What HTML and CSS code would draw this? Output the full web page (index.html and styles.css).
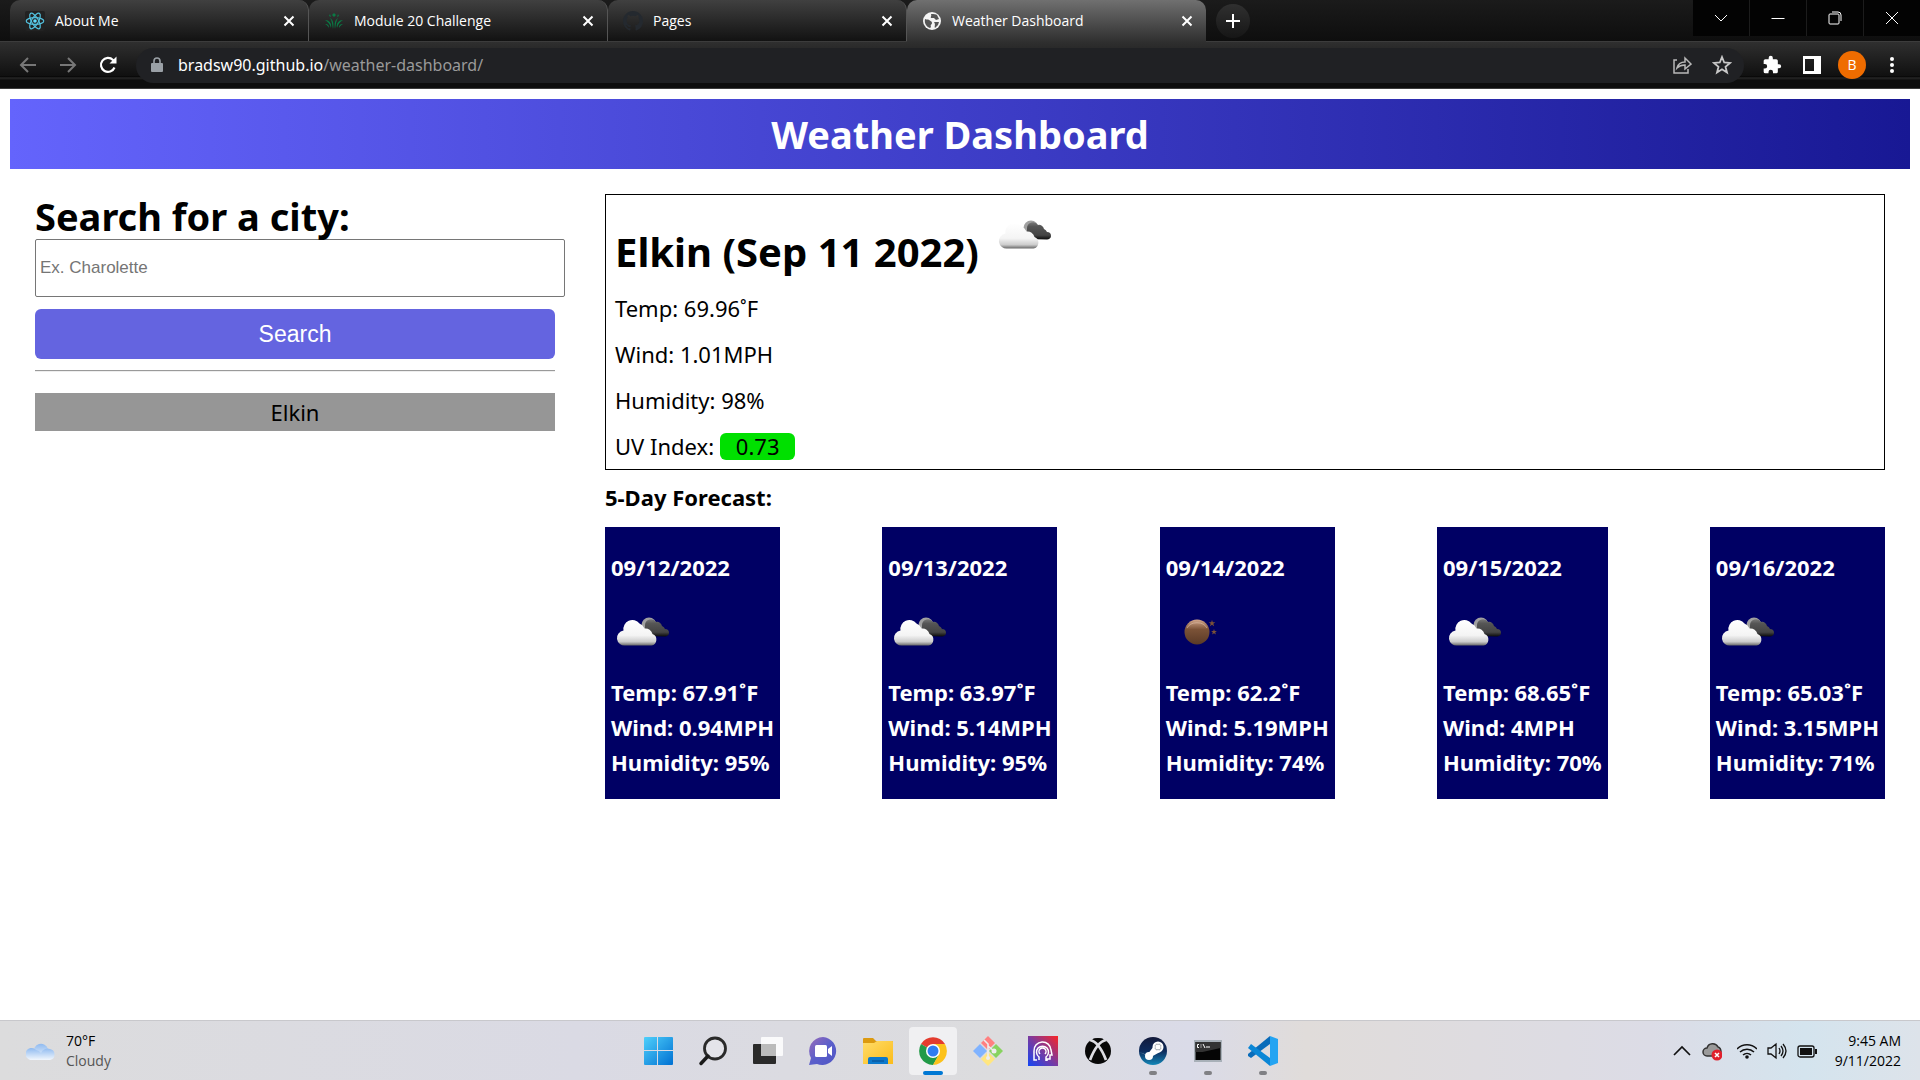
FILE: index.html
```html
<!DOCTYPE html>
<html lang="en">
<head>
<meta charset="utf-8">
<title>Weather Dashboard</title>
<link rel="stylesheet" href="styles.css">
</head>
<body>
<svg class="defs" aria-hidden="true">
  <defs>
    <linearGradient id="cloud-light" x1="0" y1="0" x2="0" y2="1">
      <stop offset="0" stop-color="#fff"/><stop offset=".6" stop-color="#f4f4f4"/><stop offset=".85" stop-color="#ccc"/><stop offset="1" stop-color="#666"/>
    </linearGradient>
    <linearGradient id="cloud-dark" x1="0" y1="0" x2="0" y2="1">
      <stop offset="0" stop-color="#777"/><stop offset=".25" stop-color="#555"/><stop offset=".75" stop-color="#444"/><stop offset="1" stop-color="#0a0a0a"/>
    </linearGradient>
    <linearGradient id="moon-fill" x1="0" y1="0" x2="0" y2="1">
      <stop offset="0" stop-color="#d3a78c"/><stop offset=".4" stop-color="#7b5237"/><stop offset="1" stop-color="#5a3a26"/>
    </linearGradient>
    <linearGradient id="win-fill" x1="0" y1="0" x2="1" y2="1"><stop offset="0" stop-color="#4fd0fb"/><stop offset="1" stop-color="#0070d2"/></linearGradient>
    <linearGradient id="chat-fill" x1="0" y1="0" x2="1" y2="1"><stop offset="0" stop-color="#9a6bb8"/><stop offset=".5" stop-color="#5b5fcb"/><stop offset="1" stop-color="#4f55c4"/></linearGradient>
    <linearGradient id="folder-fill" x1="0" y1="0" x2="1" y2="1"><stop offset="0" stop-color="#ffdc6a"/><stop offset="1" stop-color="#fbbc1a"/></linearGradient>
    <linearGradient id="head-fill" x1="0" y1="1" x2="1" y2="0"><stop offset="0" stop-color="#1246f5"/><stop offset=".5" stop-color="#7a3aa0"/><stop offset="1" stop-color="#fb2525"/></linearGradient>
    <linearGradient id="steam-fill" x1="0" y1="0" x2="0" y2="1"><stop offset="0" stop-color="#131a3a"/><stop offset=".5" stop-color="#0d2b5c"/><stop offset="1" stop-color="#1387b8"/></linearGradient>
    <linearGradient id="sky-fill" x1="0" y1="0" x2="0" y2="1"><stop offset="0" stop-color="#8fbaf0"/><stop offset="1" stop-color="#f2f7fd"/></linearGradient>
    <symbol id="clouds" viewBox="0 0 63 63">
      <circle cx="38" cy="24" r="7.500" fill="#a0a0a0"/>
      <path d="M34 35V24a6 6 0 0 1 11-3 5 5 0 0 1 6 4 5 5 0 0 1 3 3 4 4 0 0 1 4 4c0 2-2 3.500-4 3.500z" fill="url(#cloud-dark)"/>
      <path d="M15 44a7.500 7.500 0 0 1-2-15 9 9 0 0 1 16-7 9 9 0 0 1 5 5 7 7 0 0 1 8 5.500 6 6 0 0 1-1 11.500z" transform="translate(-.5 .5)" fill="url(#cloud-light)"/>
    </symbol>
    <symbol id="moon" viewBox="0 0 63 63">
      <circle cx="31" cy="31" r="12.500" fill="url(#moon-fill)"/>
      <path d="M21 27a11 9 0 0 1 20 0" fill="none" stroke="#e0c0aa" stroke-width="1" opacity=".6"/>
      <path d="m46 19 .8 2.200h2.500l-2 1.600.8 2.500-2.100-1.500-2.100 1.500.8-2.500-2-1.600h2.500zM48 28l.7 2h2.200l-1.700 1.300.7 2.200-1.900-1.300-1.900 1.300.7-2.200-1.700-1.300h2.200z" fill="#7b5237"/>
    </symbol>
    <symbol id="close" viewBox="0 0 12 12"><path d="m1.500 1.500 9 9m0-9-9 9" stroke="#fff" stroke-width="2" fill="none"/></symbol>
  </defs>
</svg>

<header class="browser">
  <div class="tab-strip">
    <div class="tab">
      <svg class="favicon" viewBox="0 0 20 20"><rect width="20" height="20" rx="2" fill="#222"/><g fill="none" stroke="#53c1de" stroke-width="1.200"><ellipse cx="10" cy="10" rx="8.800" ry="3.400"/><ellipse cx="10" cy="10" rx="8.800" ry="3.400" transform="rotate(60 10 10)"/><ellipse cx="10" cy="10" rx="8.800" ry="3.400" transform="rotate(120 10 10)"/></g><circle cx="10" cy="10" r="1.800" fill="#61dafb"/></svg>
      <span class="tab-title">About Me</span>
      <button class="tab-close" aria-label="Close About Me"><svg><use href="#close"/></svg></button>
    </div>
    <div class="tab">
      <svg class="favicon" viewBox="0 0 20 20"><g fill="#0a7a45"><path d="m10 2 2 2-2 2-2-2zM6 3l1 3-2-1zM14 3l-1 3 2-1z"/><path d="M9 18C8 13 8 10 6 7c3 2 4 5 3 11zM11 18c1-5 1-8 3-11-3 2-4 5-3 11zM7 17c-1-4-3-6-6-8 4 0 7 3 6 8zM13 17c1-4 3-6 6-8-4 0-7 3-6 8zM5 17c-1-2-2-3-4-4 3 0 4 1 4 4zM15 17c1-2 2-3 4-4-3 0-4 1-4 4z"/></g></svg>
      <span class="tab-title">Module 20 Challenge</span>
      <button class="tab-close" aria-label="Close Module 20 Challenge"><svg><use href="#close"/></svg></button>
    </div>
    <div class="tab">
      <svg class="favicon" viewBox="0 0 16 16"><path fill="#24292f" d="M8 0C3.580 0 0 3.580 0 8c0 3.540 2.290 6.530 5.470 7.590.4.070.55-.17.55-.38v-1.490c-2.010.37-2.530-.49-2.690-.94-.09-.23-.48-.94-.82-1.130-.28-.15-.68-.52-.01-.53.63-.01 1.080.58 1.230.82.72 1.210 1.870.87 2.330.66.07-.52.28-.87.51-1.070-1.780-.2-3.640-.89-3.640-3.950 0-.87.31-1.590.82-2.150-.08-.2-.36-1.020.08-2.120 0 0 .67-.21 2.200.82a7.500 7.500 0 0 1 4 0c1.530-1.040 2.200-.82 2.200-.82.44 1.100.16 1.920.08 2.120.51.56.82 1.270.82 2.150 0 3.070-1.870 3.750-3.650 3.950.29.25.54.73.54 1.480v2.200c0 .21.15.46.55.38A8 8 0 0 0 16 8c0-4.420-3.580-8-8-8z"/></svg>
      <span class="tab-title">Pages</span>
      <button class="tab-close" aria-label="Close Pages"><svg><use href="#close"/></svg></button>
    </div>
    <div class="tab tab-active">
      <svg class="favicon" viewBox="0 0 20 20"><circle cx="10" cy="10" r="9" fill="#f4f4f4"/><path d="M3 8c2 1 3 0 4 1s3 1 3 3-2 1-1 4l-1 1c-3-1-6-4-5-9zM9 3c3 0 5 0 6 1l2 4-3 1-2-2-3 0c-1-1 1-2 0-4zM12 11l5 0-1 3-3 3c-1-2 1-3-1-6z" fill="#555"/></svg>
      <span class="tab-title">Weather Dashboard</span>
      <button class="tab-close" aria-label="Close Weather Dashboard"><svg><use href="#close"/></svg></button>
    </div>
    <button class="new-tab" aria-label="New tab"><svg viewBox="0 0 16 16"><path d="M8 1v14M1 8h14" stroke="#fff" stroke-width="2"/></svg></button>
    <div class="window-controls">
      <button aria-label="Search tabs"><svg viewBox="0 0 14 14"><path d="m1 4 6 6 6-6"/></svg></button>
      <button aria-label="Minimize"><svg viewBox="0 0 14 14"><path d="M.5 7.500h13"/></svg></button>
      <button aria-label="Restore"><svg viewBox="0 0 14 14"><rect x="1" y="3" width="10" height="10" rx="1"/><path d="M4 1h6q3 0 3 3v6"/></svg></button>
      <button aria-label="Close"><svg viewBox="0 0 14 14"><path d="m1 1 12 12M13 1 1 13"/></svg></button>
    </div>
  </div>
  <div class="toolbar">
    <div class="nav-buttons">
      <button aria-label="Back"><svg viewBox="0 0 20 20"><path d="M18 10H3m7-7-7 7 7 7" fill="none" stroke="#777" stroke-width="2"/></svg></button>
      <button aria-label="Forward"><svg viewBox="0 0 20 20"><path d="M2 10h15m-7-7 7 7-7 7" fill="none" stroke="#777" stroke-width="2"/></svg></button>
      <button aria-label="Reload"><svg viewBox="0 0 20 20"><path d="M16.500 12.500A7 7 0 1 1 15 5l2 2" fill="none" stroke="#fff" stroke-width="2.200"/><path d="M18.500 1.500v7h-7z" fill="#fff"/></svg></button>
    </div>
    <div class="omnibox">
      <svg class="lock" viewBox="0 0 12 16"><rect x="0" y="6" width="12" height="9" rx="1" fill="#9aa0a6"/><path d="M3 7V4a3 3 0 0 1 6 0v3" fill="none" stroke="#9aa0a6" stroke-width="1.600"/></svg>
      <a class="url" href="#"><span class="url-host">bradsw90.github.io</span>/weather-dashboard/</a>
      <button aria-label="Share"><svg viewBox="0 0 20 20"><path d="M5 5H2v13h14v-4M5 13c1-4 4-6 8-6V3l6 6-6 5v-4c-4 0-6 1-8 3z" fill="none" stroke="#b8b8b8" stroke-width="1.500"/></svg></button>
      <button aria-label="Bookmark"><svg viewBox="0 0 20 20"><path d="m10 2 2.200 5.500 5.800.4-4.500 3.800 1.500 5.800-5-3.200-5 3.200 1.500-5.800L2 7.900l5.800-.4z" fill="none" stroke="#c8c8c8" stroke-width="1.800"/></svg></button>
    </div>
    <div class="toolbar-actions">
      <button aria-label="Extensions"><svg viewBox="0 0 24 24"><path fill="#fff" d="M20.500 11H19V7a2 2 0 0 0-2-2h-4V3.500a2.500 2.500 0 0 0-5 0V5H4a2 2 0 0 0-2 2v3.800h1.500a2.700 2.700 0 0 1 0 5.400H2V20a2 2 0 0 0 2 2h3.800v-1.500a2.700 2.700 0 0 1 5.400 0V22H17a2 2 0 0 0 2-2v-4h1.500a2.500 2.500 0 0 0 0-5z"/></svg></button>
      <button aria-label="Side panel"><svg viewBox="0 0 20 20"><path fill="#fff" fill-rule="evenodd" d="M1 1h18v18H1zM3 4v12h9V4z"/></svg></button>
      <button class="avatar" aria-label="Profile">B</button>
      <button aria-label="Menu"><svg viewBox="0 0 20 20"><g fill="#fff"><circle cx="10" cy="4" r="2"/><circle cx="10" cy="10" r="2"/><circle cx="10" cy="16" r="2"/></g></svg></button>
    </div>
  </div>
</header>

<main class="page">
  <h1 class="banner">Weather Dashboard</h1>
  <div class="dashboard">
    <aside class="search">
      <form>
        <label class="heading" for="city">Search for a city:</label>
        <input id="city" class="city-input" type="text" placeholder="Ex. Charolette">
        <button class="search-button" type="button">Search</button>
      </form>
      <hr class="rule">
      <button class="history-item">Elkin</button>
    </aside>
    <section class="results">
      <article class="current">
        <h2 class="current-title">Elkin (Sep 11 2022) <svg class="weather-icon"><use href="#clouds"/></svg></h2>
        <p>Temp: 69.96˚F</p>
        <p>Wind: 1.01MPH</p>
        <p>Humidity: 98%</p>
        <p>UV Index: <span class="uv">0.73</span></p>
      </article>
      <h3 class="forecast-title">5-Day Forecast:</h3>
      <div class="forecast">
        <article class="day"><h4>09/12/2022</h4><svg class="weather-icon"><use href="#clouds"/></svg><p>Temp: 67.91˚F</p><p>Wind: 0.94MPH</p><p>Humidity: 95%</p></article>
        <article class="day"><h4>09/13/2022</h4><svg class="weather-icon"><use href="#clouds"/></svg><p>Temp: 63.97˚F</p><p>Wind: 5.14MPH</p><p>Humidity: 95%</p></article>
        <article class="day"><h4>09/14/2022</h4><svg class="weather-icon"><use href="#moon"/></svg><p>Temp: 62.2˚F</p><p>Wind: 5.19MPH</p><p>Humidity: 74%</p></article>
        <article class="day"><h4>09/15/2022</h4><svg class="weather-icon"><use href="#clouds"/></svg><p>Temp: 68.65˚F</p><p>Wind: 4MPH</p><p>Humidity: 70%</p></article>
        <article class="day"><h4>09/16/2022</h4><svg class="weather-icon"><use href="#clouds"/></svg><p>Temp: 65.03˚F</p><p>Wind: 3.15MPH</p><p>Humidity: 71%</p></article>
      </div>
    </section>
  </div>
</main>

<footer class="taskbar">
  <div class="widget">
    <svg viewBox="0 0 30 20"><path d="M8 12a7 7 0 0 1 14-4v10H8z" fill="url(#sky-fill)"/><path d="M6 19a6 6 0 1 1 4-10 7 7 0 0 1 5 3 7 7 0 0 1 9-4 5.600 5.600 0 0 1 0 11z" fill="url(#sky-fill)"/></svg>
    <div><div class="degrees">70°F</div><div class="sky">Cloudy</div></div>
  </div>
  <nav class="apps">
    <button aria-label="Start"><svg viewBox="0 0 30 30"><path d="M2 1h12v13H1V2q0-1 1-1zM15 1h14q1 0 1 1v12H15zM1 15h13v14H2q-1 0-1-1zM15 15h15v13q0 1-1 1H15z" fill="url(#win-fill)"/></svg></button>
    <button aria-label="Search"><svg viewBox="0 0 30 30"><circle cx="17" cy="12.500" r="10.500" fill="#e4e4ea" stroke="#2a2a2a" stroke-width="2.800"/><path d="M10 20 3 27.500" stroke="#1a1a1a" stroke-width="3.500" stroke-linecap="round"/></svg></button>
    <button aria-label="Task view"><svg viewBox="0 0 30 30"><rect x="0" y="8" width="23" height="20" rx="1" fill="#2a2a2a"/><rect x="8" y="1" width="22" height="19" rx="1" fill="#fff" opacity=".85"/><path d="M8 8h15v12H8z" fill="#bbb"/></svg></button>
    <button aria-label="Chat"><svg viewBox="0 0 30 30"><path d="M15 1a14 14 0 1 1-6 27L1 29l2-7A14 14 0 0 1 15 1z" fill="url(#chat-fill)"/><rect x="7" y="9" width="12" height="12" rx="1.500" fill="#fff"/><path d="m20 13 4-3v10l-4-3z" fill="#fff"/></svg></button>
    <button aria-label="File Explorer"><svg viewBox="0 0 30 30"><path d="M0 3q0-1 1-1h9l3 3h16q1 0 1 1v6H0z" fill="#dc9a10"/><path d="M0 7h11l3-2h15q1 0 1 1v22H0z" fill="url(#folder-fill)"/><path d="M5 28v-5q0-2 2-2h16q2 0 2 2v5z" fill="#0c79cc"/><path d="M9 25h12" stroke="#074a8c" stroke-width="1"/></svg></button>
    <button class="app-active" aria-label="Chrome"><svg viewBox="0 0 30 30"><path d="M15 15 3 8a14 14 0 0 1 24 0z" fill="#e33b2e"/><path d="M15 15 3 8a14 14 0 0 0 12 21l6-10z" fill="#229a48"/><path d="M15 15V8h12a14 14 0 0 1-12 21l6-11z" fill="#fcc21b"/><circle cx="15" cy="15" r="7" fill="#fff"/><circle cx="15" cy="15" r="5.500" fill="#2f7cf0"/></svg></button>
    <button aria-label="Git"><svg viewBox="0 0 30 30"><path d="m15 0 7 7-7 7-7-7z" fill="#ff8080"/><path d="m7 8 7 7-7 7-7-7z" fill="#80b3ff"/><path d="m23 8 7 7-7 7-7-7z" fill="#87d35f"/><path d="m15 16 7 7-7 7-7-7z" fill="#ffe680"/><path d="m11 4 4 4v14m0-12 6 5" fill="none" stroke="#eee" stroke-width="1.600"/><circle cx="15" cy="22" r="2" fill="#eee"/><circle cx="21" cy="15" r="2.500" fill="#eee"/></svg></button>
    <button aria-label="Mind app"><svg viewBox="0 0 30 30"><rect width="30" height="30" fill="url(#head-fill)"/><path d="M9 24H6v-9a8.500 8.500 0 0 1 17-1l1 5h-2v4h-3v2M11 24v-3a6 6 0 1 1 7 0v4M12 18a3.500 3.500 0 1 1 5 0" fill="none" stroke="#fff" stroke-width="1.500"/></svg></button>
    <button aria-label="Xbox"><svg viewBox="0 0 30 30"><circle cx="15" cy="15" r="13" fill="#080808"/><path d="M7 4c5 1 11 7 16 20M23 4C18 5 12 11 7 24" fill="none" stroke="#dcdce2" stroke-width="2.800"/><path d="M10 2.500q5 0 10 0l-5 3z" fill="#080808"/></svg></button>
    <button class="app-running" aria-label="Steam"><svg viewBox="0 0 30 30"><circle cx="15" cy="15" r="14" fill="url(#steam-fill)"/><path d="m1 16 8 3 7-9 6 6-9 5" fill="#fff"/><circle cx="20" cy="11" r="5.500" fill="#fff"/><circle cx="20" cy="11" r="3.500" fill="#123" stroke="#fff"/><circle cx="20" cy="11" r="2.800" fill="#fff"/><circle cx="11" cy="20" r="4" fill="#fff"/></svg></button>
    <button class="app-running" aria-label="Command Prompt"><svg viewBox="0 0 30 30"><rect x="1" y="4" width="28" height="22" fill="#a8b0b8"/><rect x="2.500" y="6" width="25" height="18" fill="#050505"/><path d="M2.500 6h25v6l-18 4h-7z" fill="#333"/><path d="M6 8.500H4.500v3H6M8 8.500v1m0 1v1M10 8l2 4M13 11h4" stroke="#fff" stroke-width="1" fill="none"/></svg></button>
    <button class="app-running" aria-label="Visual Studio Code"><svg viewBox="0 0 30 30"><path d="M22 8 3 22l-3-2v-2L22 0z" fill="#0a6cba"/><path d="M22 30 0 12l3-4 19 14z" fill="#0a86d6"/><path d="m22 0 8 3v24l-8 3z" fill="#24a4f2"/></svg></button>
  </nav>
  <div class="tray">
    <svg viewBox="0 0 20 20"><path d="m2 14 8-8 8 8" fill="none" stroke="#111" stroke-width="1.700"/></svg>
    <svg class="sync" viewBox="0 0 20 20"><path d="M5 15a4 4 0 0 1 0-8 6 6 0 0 1 11-1q3 1 3 5l-5 4z" fill="#9a9a9a" stroke="#333" stroke-width="1.500"/><circle cx="15" cy="14" r="5.500" fill="#e0202c"/><path d="m13 12 4 4m0-4-4 4" stroke="#fff" stroke-width="1.500"/></svg>
    <svg viewBox="0 0 20 20"><g fill="none" stroke="#111" stroke-width="1.500"><path d="M0 8a14 14 0 0 1 20 0M3 11a10 10 0 0 1 14 0M6 14a6 6 0 0 1 8 0"/></g><circle cx="10" cy="16" r="1.800" fill="#111"/></svg>
    <svg viewBox="0 0 20 20"><path d="M1 7v6h3l5 4V3L4 7zM12 7q2 3 0 6M14 5q4 5 0 10M16 3q6 7 0 14" fill="none" stroke="#111" stroke-width="1.300"/></svg>
    <svg viewBox="0 0 20 20"><rect x="1" y="5" width="16" height="11" rx="2" fill="none" stroke="#111" stroke-width="1.300"/><rect x="3" y="7" width="12" height="7" fill="#111"/><path d="M18 8h2v5h-2z" fill="#111"/></svg>
    <div class="clock"><div>9:45 AM</div><div>9/11/2022</div></div>
  </div>
</footer>
</body>
</html>
```
FILE: styles.css
```css
* {
  box-sizing: border-box;
}

body {
  margin: 0;
  min-height: 100vh;
  display: flex;
  flex-direction: column;
  background: #fff;
  color: #000;
  font-family: "Noto Sans", sans-serif;
  font-size: 22px;
  line-height: 27px;
}

h1, h2, h3, h4, p {
  margin: 0;
  font-size: inherit;
}

button {
  display: flex;
  align-items: center;
  justify-content: center;
  border: 0;
  padding: 0;
  background: none;
  color: inherit;
  font: inherit;
}

.defs {
  position: absolute;
  width: 0;
  height: 0;
}

/* Browser frame */
.browser {
  color: #fff;
  background: #121212;
  font-family: "Open Sans", sans-serif;
  font-size: 14px;
  line-height: 20px;
}

.tab-strip {
  display: flex;
  height: 42px;
  padding: 0 0 0 10px;
  background: linear-gradient(#1b1b1b, #0e0e0e);
  border-bottom: 1px solid #3c3c3c;
}

.tab {
  flex: 0 1 299px;
  display: flex;
  align-items: center;
  gap: 10px;
  min-width: 0;
  padding: 0 12px 0 15px;
  background: linear-gradient(#404040, #121212);
  border-radius: 10px 10px 0 0;
  border-right: 1px solid #555;
}

.tab-active {
  height: 42px;
  background: linear-gradient(#707070, #2f2f2f);
  border-right: 0;
}

.favicon {
  flex: none;
  width: 20px;
  height: 20px;
}

.tab-title {
  flex: 1;
  white-space: nowrap;
}

.tab-close svg {
  width: 12px;
  height: 12px;
  margin: 0 1px;
}

.new-tab {
  width: 34px;
  height: 34px;
  margin: 4px 0 0 10px;
  border-radius: 50%;
  background: linear-gradient(#303030, #161616);
}

.new-tab svg {
  width: 16px;
  height: 16px;
}

.window-controls {
  display: flex;
  gap: 1px;
  height: 36px;
  margin-left: auto;
  background: #1c1c1c;
}

.window-controls button {
  width: 56px;
  background: #030303;
}

.window-controls svg {
  width: 14px;
  height: 14px;
  fill: none;
  stroke: #fff;
}

.toolbar {
  display: flex;
  align-items: center;
  height: 47px;
  padding: 0 8px;
  background: linear-gradient(#2f2f2f, #101010 34px, #000 34px, #262626 36px, #0e0e0e 38px, #0e0e0e);
  border-bottom: 1px solid #3c3c3c;
}

.nav-buttons {
  display: flex;
  width: 128px;
}

.nav-buttons button {
  width: 40px;
}

.nav-buttons svg,
.toolbar-actions svg,
.omnibox button svg {
  width: 20px;
  height: 20px;
}

.omnibox {
  flex: 1;
  display: flex;
  align-items: center;
  gap: 20px;
  height: 35px;
  padding: 0 12px 0 15px;
  border-radius: 18px;
  background: #202124;
}

.lock {
  width: 12px;
  height: 16px;
}

.url {
  flex: 1;
  margin-left: -5px;
  color: #9a9a9a;
  font-family: "Noto Sans", sans-serif;
  font-size: 16px;
  text-decoration: none;
}

.url-host {
  color: #fff;
}

.toolbar-actions {
  display: flex;
  align-items: center;
  margin-left: 8px;
}

.toolbar-actions button {
  width: 40px;
}

.toolbar-actions .avatar {
  width: 28px;
  height: 28px;
  margin: 0 6px;
  border-radius: 50%;
  background: #ef6c00;
  font-size: 14px;
}

/* Page */
.page {
  flex: 1;
  padding: 10px;
}

.banner {
  background: linear-gradient(to right, #6464fc, #181894);
  color: #fff;
  font-size: 38px;
  font-weight: 700;
  line-height: 70px;
  text-align: center;
}

.dashboard {
  display: grid;
  grid-template-columns: minmax(0, 13fr) minmax(0, 32fr);
  gap: 50px;
  padding: 25px;
}

.heading,
.current-title {
  font-size: 38px;
  font-weight: 700;
  line-height: 45px;
}

.heading {
  display: block;
}

.city-input {
  box-sizing: content-box;
  display: block;
  width: 100%;
  height: 56px;
  padding: 0 4px;
  border: 1px solid #767676;
  border-radius: 2px;
  font: 17px "Liberation Sans", sans-serif;
}

.city-input::placeholder {
  color: #757575;
}

.search-button {
  width: 100%;
  height: 50px;
  margin-top: 12px;
  border-radius: 6px;
  background: #6464e0;
  color: #fff;
  font: 23px "Liberation Sans", sans-serif;
}

.rule {
  margin: 11px 0 21px;
  border: 0;
  border-top: 1px solid #9a9a9a;
  border-bottom: 1px solid #eee;
}

.history-item {
  width: 100%;
  height: 38px;
  background: #969696;
}

.current {
  display: flex;
  flex-direction: column;
  gap: 19px;
  padding: 9px;
  border: 1px solid #000;
}

.current-title {
  display: flex;
  align-items: baseline;
  gap: 14px;
  margin-bottom: 2px;
  font-size: 40px;
}

.weather-icon {
  display: block;
  flex: none;
  width: 63px;
  height: 63px;
}

.uv {
  display: inline-block;
  padding: 0 16px;
  border-radius: 6px;
  background: #00e000;
}

.forecast-title {
  margin: 14px 0 16px;
  font-weight: 700;
}

.forecast {
  display: flex;
  justify-content: space-between;
}

.day {
  padding: 27px 6px 23px;
  background: #000064;
  color: #fff;
  font-weight: 700;
}

.day .weather-icon {
  margin: 20px 0 15px;
}

.day p + p {
  margin-top: 8px;
}

/* Taskbar */
.taskbar {
  display: grid;
  grid-template-columns: 1fr auto 1fr;
  align-items: center;
  height: 60px;
  padding: 0 19px;
  border-top: 1px solid #c8c8cc;
  background: linear-gradient(to right, #dcdcdd, #dadae4 30%, #dcdcde 52%, #dadbe8 62%, #e0dcda 68%, #dcdce6 86%, #d4e4ee 94%, #dde3ea);
  font-family: "Open Sans", sans-serif;
  font-size: 14px;
  line-height: 20px;
}

.widget {
  display: flex;
  align-items: center;
  gap: 10px;
  padding-left: 7px;
}

.widget svg {
  width: 30px;
  height: 20px;
}

.sky {
  color: #555;
}

.apps {
  display: flex;
  gap: 7px;
}

.apps button {
  position: relative;
  width: 48px;
  height: 48px;
  border-radius: 4px;
}

.apps svg {
  width: 30px;
  height: 30px;
}

.apps .app-active {
  background: #f0f0f2;
}

.app-active::after,
.app-running::after {
  content: "";
  position: absolute;
  bottom: 0;
  width: 20px;
  height: 4px;
  border-radius: 2px;
  background: #0078d4;
}

.app-running::after {
  width: 8px;
  background: #808084;
}

.tray {
  display: flex;
  align-items: center;
  justify-content: flex-end;
  gap: 10px;
}

.tray svg {
  width: 20px;
  height: 20px;
}

.tray .sync {
  margin-right: 5px;
}

.clock {
  width: 74px;
  text-align: right;
}
```
